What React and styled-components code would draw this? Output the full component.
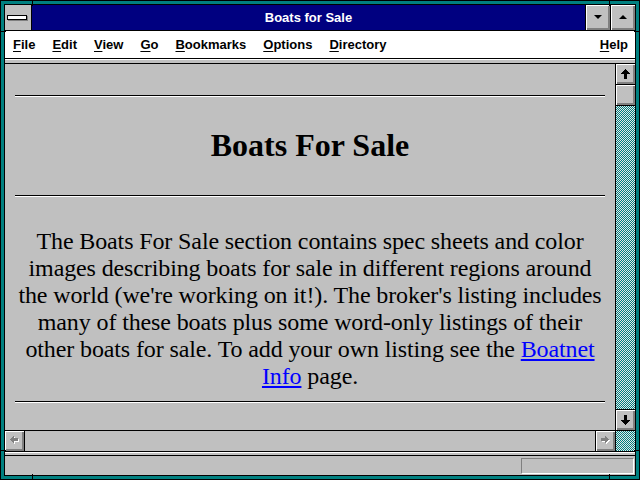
import React from 'react';
import styled, { createGlobalStyle } from 'styled-components';

const Global = createGlobalStyle`
  html, body { margin: 0; padding: 0; background: #008080; }
  #root { width: 640px; height: 480px; }
  * { box-sizing: border-box; }
`;

const GRAY = '#c0c0c0';
const DARK = '#808080';

const Frame = styled.div`
  position: relative;
  width: 640px;
  height: 480px;
  background: #008080;
  border: 1px solid #000;
  padding: 3px;
`;

const Notch = styled.div`
  position: absolute;
  background: #000;
  width: ${p => (p.$v ? '1px' : '5px')};
  height: ${p => (p.$v ? '5px' : '1px')};
`;

const Inner = styled.div`
  height: 100%;
  border: 1px solid #000;
  display: flex;
  flex-direction: column;
  background: ${GRAY};
  font-family: "Liberation Sans", Arial, sans-serif;
`;

const TitleBar = styled.div`
  height: 26px;
  flex: none;
  display: flex;
  border-bottom: 1px solid #000;
`;

const SysBox = styled.div`
  width: 27px;
  border-right: 1px solid #000;
  background: ${GRAY};
  display: flex;
  align-items: center;
  justify-content: center;
  padding-right: 2px;
`;

const SysBar = styled.div`
  width: 20px;
  height: 5px;
  background: #fff;
  border: 1px solid #000;
  box-shadow: 1px 1px 0 ${DARK};
`;

const TitleText = styled.div`
  flex: 1;
  background: #000080;
  color: #fff;
  font-weight: bold;
  font-size: 13px;
  display: flex;
  align-items: center;
  justify-content: center;
`;

const CaptionButton = styled.div`
  width: 25px;
  border-left: 1px solid #000;
  background: ${GRAY};
  box-shadow: inset 1px 1px 0 #fff, inset -1px -1px 0 ${DARK}, inset -2px -2px 0 ${DARK};
  display: flex;
  align-items: center;
  justify-content: center;
  padding: 0 1px 1px 0;
`;

const Tri = styled.div`
  width: 0;
  height: 0;
  border-left: 4px solid transparent;
  border-right: 4px solid transparent;
  ${p => (p.$up ? 'border-bottom: 4px solid #000;' : 'border-top: 4px solid #000;')}
`;

const MenuBar = styled.div`
  height: 28px;
  flex: none;
  background: #fff;
  border-bottom: 1px solid #000;
  display: flex;
  align-items: center;
  gap: 17px;
  padding: 0 7px 1px 8px;
  font-size: 13px;
  font-weight: bold;
  color: #000;
`;

const MenuItem = styled.span`
  margin-left: ${p => (p.$right ? 'auto' : '0')};
  & u { text-decoration: underline; text-underline-offset: 2px; }
`;

const Divider = styled.div`
  height: 5px;
  flex: none;
  background: ${GRAY};
  border-top: 1px solid #fff;
  border-bottom: 1px solid #000;
`;

const Viewport = styled.div`
  flex: 1;
  display: flex;
  min-height: 0;
`;

const Content = styled.div`
  flex: 1;
  background: ${GRAY};
  padding: 31px 10px 0;
  overflow: hidden;
  font-family: "Liberation Serif", "Times New Roman", serif;
  color: #000;
`;

const Rule = styled.div`
  height: 2px;
  border-top: 1px solid #000;
  border-bottom: 1px solid #fff;
  margin-top: ${p => p.$mt || 0}px;
`;

const Heading = styled.h1`
  margin: 32px 0 0;
  font-size: 32px;
  line-height: 32px;
  font-weight: bold;
  text-align: center;
`;

const Para = styled.p`
  margin: 31px 0 0;
  font-size: 24px;
  line-height: 27px;
  letter-spacing: -0.12px;
  text-align: center;
`;

const Link = styled.a`
  color: #0000ff;
  text-decoration: underline;
`;

const VScroll = styled.div`
  width: 20px;
  flex: none;
  border-left: 1px solid #000;
  display: flex;
  flex-direction: column;
`;

const ScrollButton = styled.div`
  width: 19px;
  height: ${p => (p.$h || 20) + 1}px;
  flex: none;
  background: ${GRAY};
  box-shadow: inset 1px 1px 0 #fff, inset -1px -1px 0 ${DARK}, inset -2px -2px 0 ${DARK};
  display: flex;
  align-items: center;
  justify-content: center;
  padding: 0 1px 1px 0;
  ${p => p.$bb && 'border-bottom: 1px solid #000;'}
  ${p => p.$bt && 'border-top: 1px solid #000;'}
  ${p => p.$br && 'border-right: 1px solid #000; width: 20px;'}
  ${p => p.$bl && 'border-left: 1px solid #000; width: 20px;'}
`;

const Dither = styled.div`
  flex: 1;
  background-color: #fff;
  background-image: repeating-conic-gradient(#008080 0% 25%, #e8e8e8 0% 50%);
  background-size: 2px 2px;
  ${p => p.$corner && 'width: 20px; flex: none; border-left: 1px solid #000;'}
`;

const HScroll = styled.div`
  height: 22px;
  flex: none;
  display: flex;
  border-top: 1px solid #000;
  border-bottom: 1px solid #000;
`;

const HTrack = styled.div`
  flex: 1;
  background: ${GRAY};
`;

const Band = styled.div`
  height: 4px;
  flex: none;
  background: ${GRAY};
  border-top: 1px solid #fff;
  border-bottom: 1px solid #000;
`;

const StatusBar = styled.div`
  height: 19px;
  flex: none;
  display: flex;
  justify-content: flex-end;
  padding: 2px 1px 1px 0;
  background: ${GRAY};
`;

const StatusField = styled.div`
  width: 113px;
  border-top: 1px solid ${DARK};
  border-left: 1px solid ${DARK};
  border-bottom: 1px solid #fff;
  border-right: 1px solid #fff;
`;

const BIG = 'M4 0h1v1h1v1h1v1h1v1h1v1H6v5H3V5H0V4h1V3h1V2h1V1h1z';
const SMALL = 'M0 3h1V2h1V1h1V0h1v2h4v3H4v2H3V6H2V5H1V4H0z';

const BigArrow = ({ down }) => (
  <svg width="9" height="10" viewBox="0 0 9 10" shapeRendering="crispEdges"
    style={down ? { transform: 'rotate(180deg)' } : undefined}>
    <path d={BIG} fill="#000" />
  </svg>
);

const GhostArrow = ({ right }) => (
  <svg width="9" height="9" viewBox="0 0 9 9" shapeRendering="crispEdges"
    style={right ? { transform: 'scaleX(-1)' } : undefined}>
    <path d={SMALL} fill="#fff" transform={right ? 'translate(0 1)' : 'translate(1 1)'} />
    <path d={SMALL} fill={DARK} transform={right ? 'translate(1 0)' : undefined} />
  </svg>
);

const menus = [
  ['F', 'ile'],
  ['E', 'dit'],
  ['V', 'iew'],
  ['G', 'o'],
  ['B', 'ookmarks'],
  ['O', 'ptions'],
  ['D', 'irectory'],
];

export default function App() {
  return (
    <>
      <Global />
      <Frame>
        <Notch $v style={{ left: 31, top: 0 }} />
        <Notch $v style={{ left: 608, top: 0 }} />
        <Notch $v style={{ left: 31, bottom: 0 }} />
        <Notch $v style={{ left: 608, bottom: 0 }} />
        <Notch style={{ left: 0, top: 30 }} />
        <Notch style={{ right: 0, top: 30 }} />
        <Notch style={{ left: 0, top: 449 }} />
        <Notch style={{ right: 0, top: 449 }} />
        <Inner>
          <TitleBar>
            <SysBox><SysBar /></SysBox>
            <TitleText>Boats for Sale</TitleText>
            <CaptionButton><Tri /></CaptionButton>
            <CaptionButton><Tri $up /></CaptionButton>
          </TitleBar>
          <MenuBar>
            {menus.map(([k, rest]) => (
              <MenuItem key={k}><u>{k}</u>{rest}</MenuItem>
            ))}
            <MenuItem $right><u>H</u>elp</MenuItem>
          </MenuBar>
          <Divider />
          <Viewport>
            <Content>
              <Rule />
              <Heading>Boats For Sale</Heading>
              <Rule $mt={34} />
              <Para>
                The Boats For Sale section contains spec sheets and color images
                describing boats for sale in different regions around the world
                (we're working on it!). The broker's listing includes many of these
                boats plus some word-only listings of their other boats for sale. To
                add your own listing see the <Link href="#">Boatnet Info</Link> page.
              </Para>
              <Rule $mt={11} />
            </Content>
            <VScroll>
              <ScrollButton $bb><BigArrow /></ScrollButton>
              <ScrollButton $bb />
              <Dither />
              <ScrollButton $bt><BigArrow down /></ScrollButton>
            </VScroll>
          </Viewport>
          <HScroll>
            <ScrollButton $br $h={19}><GhostArrow /></ScrollButton>
            <HTrack />
            <ScrollButton $bl $h={19}><GhostArrow right /></ScrollButton>
            <Dither $corner />
          </HScroll>
          <Band />
          <StatusBar><StatusField /></StatusBar>
        </Inner>
      </Frame>
    </>
  );
}
